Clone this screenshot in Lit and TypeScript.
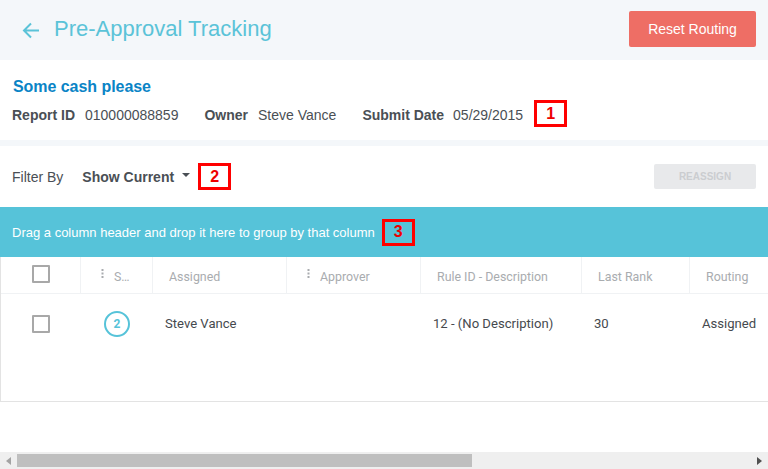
import { LitElement, html, css } from "lit";
import { customElement } from "lit/decorators.js";

const dots = html`<svg class="dots" width="3" height="9" viewBox="0 0 3 9"><rect x="0.5" y="0" width="2" height="2"/><rect x="0.5" y="3.5" width="2" height="2"/><rect x="0.5" y="7" width="2" height="2"/></svg>`;

@customElement("app-root")
export class AppRoot extends LitElement {
  static styles = css`
    :host { display: block; width: 768px; height: 469px; overflow: hidden; background: #fff; font-family: "Liberation Sans", Arial, sans-serif; color: #4a4f55; }
    .top { height: 60px; background: #f4f7fa; display: flex; align-items: center; justify-content: space-between; padding: 0 12px 0 22px; box-sizing: border-box; }
    .title { display: flex; align-items: center; gap: 15px; font-size: 22px; color: #5bc3d8; }
    .title span { padding-bottom: 2px; }
    .back { display: block; }
    .reset { width: 127px; height: 36px; margin-bottom: 2px; box-sizing: border-box; border: 0; border-radius: 2px; background: #ee6e65; color: #fff; font: 14px "Liberation Sans", Arial, sans-serif; padding: 0; }
    .info { height: 80px; box-sizing: border-box; padding-top: 18px; }
    .name { font-size: 16px; font-weight: 700; color: #0a84c6; padding-left: 13px; line-height: 18px; letter-spacing: -0.05px; }
    .meta { display: flex; align-items: center; padding-left: 12px; margin-top: 4px; font-size: 14px; height: 27px; }
    .meta b { color: #4a4f55; margin-right: 10px; padding-top: 2px; }
    .meta b.tight { margin-right: 9px; }
    .meta span.v { margin-right: 26px; padding-top: 2px; }
    .meta span.v.last { margin-right: 10px; }
    .mark { display: inline-flex; align-items: center; justify-content: center; width: 33px; height: 27px; margin-left: 1px; box-sizing: border-box; border: 3px solid #f00; color: #e00; font: 700 16px "Liberation Sans", Arial, sans-serif; flex: none; }
    .gap { height: 6px; background: #f4f7fa; }
    .filter { height: 61px; display: flex; align-items: center; padding: 0 12px; font-size: 14px; box-sizing: border-box; }
    .filter .lbl { margin-right: 19px; }
    .caret { width: 0; height: 0; border: 4px solid transparent; border-top: 4px solid #4a4f55; border-bottom: 0; margin: -4px 7px 0 8px; }
    .reassign { margin-left: auto; width: 102px; height: 25px; border: 0; border-radius: 2px; background: #e8e9eb; color: #cbcdd0; font: 700 10px "Liberation Sans", Arial, sans-serif; padding: 0; }
    .group { height: 50px; background: #56c3d9; color: #fff; display: flex; align-items: center; gap: 6px; padding-left: 12px; font-size: 13px; box-sizing: border-box; }
    .table { height: 145px; box-sizing: border-box; border: 1px solid #e3e3e3; border-top: 0; border-right: 0; font-family: Roboto, sans-serif; }
    .row { display: grid; grid-template-columns: 80px 72px 134px 134px 161px 108px 1fr; }
    .head { height: 37px; border-bottom: 1px solid #f0f2f4; box-sizing: border-box; font-size: 12.4px; color: #a9acaf; }
    .head > div { border-right: 1px solid #f0f2f4; display: flex; align-items: center; padding-left: 16px; gap: 10px; white-space: nowrap; overflow: hidden; }
    .head > div > span.t { padding-top: 2px; }
    .head > div:last-child { border-right: 0; }
    .head > div.menu { padding-left: 20px; }
    .head > div.chk, .body > div.chk { padding-left: 31px; }
    .head .chk { padding-bottom: 3px; }
    .dots { fill: #a9acaf; margin-top: -4px; flex: none; }
    .box { width: 18px; height: 18px; box-sizing: border-box; border: 2px solid #a8a8a8; border-radius: 1px; }
    .body { height: 60px; font-size: 13.1px; color: #45494e; }
    .body > div { display: flex; align-items: center; padding-left: 12px; white-space: nowrap; overflow: hidden; }
    .body .t { padding-bottom: 2px; }
    .badge { width: 26px; height: 26px; box-sizing: border-box; border: 2px solid #56c3d9; border-radius: 50%; color: #56c3d9; font-size: 12px; font-weight: 700; display: flex; align-items: center; justify-content: center; margin-left: 11px; }
    .spacer { height: 50px; }
    .sb { height: 17px; background: #efefef; display: flex; align-items: center; }
    .sb .arr { width: 17px; height: 17px; display: flex; align-items: center; justify-content: center; flex: none; }
    .thumb { width: 455px; height: 13px; background: #bfbfbf; }
    .fill { flex: 1; }
  `;

  render() {
    return html`
      <div class="top">
        <div class="title">
          <svg class="back" width="17" height="17" viewBox="0 0 17 17" fill="none" stroke="#5bc3d8" stroke-width="2"><path d="M17 8.5H2M9 1.5L2 8.5L9 15.5"/></svg>
          <span>Pre-Approval Tracking</span>
        </div>
        <button class="reset">Reset Routing</button>
      </div>
      <div class="info">
        <div class="name">Some cash please</div>
        <div class="meta">
          <b>Report ID</b><span class="v">010000088859</span>
          <b>Owner</b><span class="v">Steve Vance</span>
          <b class="tight">Submit Date</b><span class="v last">05/29/2015</span>
          <span class="mark">1</span>
        </div>
      </div>
      <div class="gap"></div>
      <div class="filter">
        <span class="lbl">Filter By</span>
        <b>Show Current</b>
        <span class="caret"></span>
        <span class="mark">2</span>
        <button class="reassign">REASSIGN</button>
      </div>
      <div class="group">
        <span>Drag a column header and drop it here to group by that column</span>
        <span class="mark">3</span>
      </div>
      <div class="table">
        <div class="row head">
          <div class="chk"><span class="box"></span></div>
          <div class="menu">${dots}<span class="t">S…</span></div>
          <div><span class="t">Assigned</span></div>
          <div class="menu">${dots}<span class="t">Approver</span></div>
          <div><span class="t">Rule ID - Description</span></div>
          <div><span class="t">Last Rank</span></div>
          <div><span class="t">Routing</span></div>
        </div>
        <div class="row body">
          <div class="chk"><span class="box"></span></div>
          <div><span class="badge">2</span></div>
          <div><span class="t">Steve Vance</span></div>
          <div></div>
          <div><span class="t">12 - (No Description)</span></div>
          <div><span class="t">30</span></div>
          <div><span class="t">Assigned</span></div>
        </div>
      </div>
      <div class="spacer"></div>
      <div class="sb">
        <span class="arr"><svg width="5" height="8" viewBox="0 0 5 8"><path d="M5 0V8L0 4Z" fill="#a3a3a3"/></svg></span>
        <span class="thumb"></span>
        <span class="fill"></span>
        <span class="arr"><svg width="5" height="8" viewBox="0 0 5 8"><path d="M0 0V8L5 4Z" fill="#505050"/></svg></span>
      </div>
    `;
  }
}
